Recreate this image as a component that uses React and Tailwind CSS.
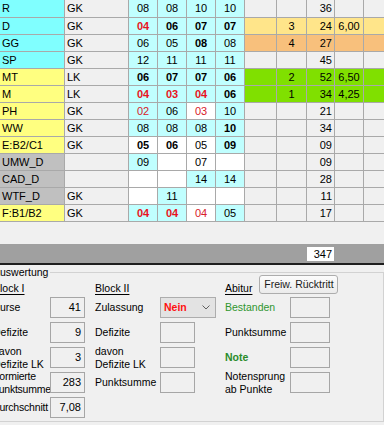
import { Fragment } from "react";

const COLS = "grid-cols-[64px_63px_28px_28px_28px_28px_31px_29px_27px_28px_1fr]";

const NAME_BG = {
  c: "bg-[#80ffff]",
  y: "bg-[#ffff80]",
  g: "bg-[#c0c0c0]",
};

const ROW_BG = {
  n: "bg-[#f0f0f0]",
  y: "bg-[#ffe58a]",
  o: "bg-[#f8c07c]",
  g: "bg-[#80e000]",
};

const TXT = {
  n: "text-black",
  b: "font-bold text-black",
  rb: "font-bold text-[#e8141e]",
  r: "text-[#d8202a]",
};

// grade: [value, style, white background]
const ROWS = [
  { n: "R", nb: "c", t: "GK", g: [["08"], ["08"], ["10"], ["10"]], k: "", s: "36", a: "", rb: "n" },
  { n: "D", nb: "c", t: "GK", g: [["04", "rb"], ["06", "b"], ["07", "b"], ["07", "b"]], k: "3", s: "24", a: "6,00", rb: "y" },
  { n: "GG", nb: "c", t: "GK", g: [["06"], ["05"], ["08", "b"], ["08"]], k: "4", s: "27", a: "", rb: "o" },
  { n: "SP", nb: "c", t: "GK", g: [["12"], ["11"], ["11"], ["11"]], k: "", s: "45", a: "", rb: "n" },
  { n: "MT", nb: "y", t: "LK", g: [["06", "b"], ["07", "b"], ["07", "b"], ["06", "b"]], k: "2", s: "52", a: "6,50", rb: "g" },
  { n: "M", nb: "y", t: "LK", g: [["04", "rb"], ["03", "rb"], ["04", "rb"], ["06", "b"]], k: "1", s: "34", a: "4,25", rb: "g" },
  { n: "PH", nb: "y", t: "GK", g: [["02", "r"], ["06"], ["03", "r", true], ["10"]], k: "", s: "21", a: "", rb: "n" },
  { n: "WW", nb: "y", t: "GK", g: [["08"], ["08"], ["08"], ["10", "b"]], k: "", s: "34", a: "", rb: "n" },
  { n: "E:B2/C1", nb: "y", t: "GK", g: [["05", "b", true], ["06", "b", true], ["05", "n", true], ["09", "b"]], k: "", s: "09", a: "", rb: "n" },
  { n: "UMW_D", nb: "g", t: "", g: [["09"], ["", "n", true], ["07", "n", true], ["", "n", true]], k: "", s: "09", a: "", rb: "n" },
  { n: "CAD_D", nb: "g", t: "", g: [["", "n", true], ["", "n", true], ["14"], ["14"]], k: "", s: "28", a: "", rb: "n" },
  { n: "WTF_D", nb: "g", t: "GK", g: [["", "n", true], ["11"], ["", "n", true], ["", "n", true]], k: "", s: "11", a: "", rb: "n" },
  { n: "F:B1/B2", nb: "y", t: "GK", g: [["04", "rb"], ["04", "rb"], ["04", "r", true], ["05"]], k: "", s: "17", a: "", rb: "n" },
];

function Box({ value, className = "w-[35px]" }) {
  return (
    <div className={`${className} h-[21px] border border-[#a6a6a6] bg-[#f0f0f0] pr-[3px] text-right text-[11px] leading-[19px]`}>
      {value}
    </div>
  );
}

function Label({ children, className = "" }) {
  return <div className={`flex h-[21px] items-center whitespace-nowrap leading-[13px] ${className}`}>{children}</div>;
}

function Auswertung() {
  return (
    <div className="pt-[7px]">
      <div className="-ml-[12px] h-[150px] border border-[#d2d2d2]">
        <div className="-mt-[7px] ml-[4px] h-[13px] leading-[13px]">
          <span className="bg-[#f0f0f0] pr-[2px]">Auswertung</span>
        </div>

        <div className="grid grid-cols-[58px_35px_75px_56px_74px_40px] grid-rows-[18px] auto-rows-[25px] pl-[3px]">
          {/* headings */}
          <div className="col-span-2 pl-[1px] pt-[3px] leading-[13px] underline underline-offset-2">Block I</div>
          <div className="col-span-2 pl-[10px] pt-[3px] leading-[13px] underline underline-offset-2">Block II</div>
          <div className="col-span-2 flex items-start pl-[9px]">
            <span className="pt-[3px] leading-[13px] underline underline-offset-2">Abitur</span>
            <button
              type="button"
              className="-mt-[4px] ml-[7px] h-[19px] w-[79px] shrink-0 whitespace-nowrap rounded-[3px] border border-[#adadad] bg-gradient-to-b from-[#fcfcfc] to-[#ebebeb] text-center leading-[17px] text-[#1a1a1a]"
            >
              Freiw. Rücktritt
            </button>
          </div>

          {/* row 1 */}
          <Label className="pl-[1px]">Kurse</Label>
          <Box value="41" />
          <Label className="pl-[10px]">Zulassung</Label>
          <div className="flex h-[21px] w-[56px] items-center justify-between border border-[#adadad] bg-[#e3e3e3] pl-[3px] pr-[5px]">
            <span className="font-bold text-[#ff1010]">Nein</span>
            <svg width="8" height="5" viewBox="0 0 8 5" className="text-[#606060]">
              <path d="M0.5 0.5 L4 4 L7.5 0.5" fill="none" stroke="currentColor" strokeWidth="1" />
            </svg>
          </div>
          <Label className="pl-[9px] text-[#2f962f]">Bestanden</Label>
          <Box value="" className="w-[40px]" />

          {/* row 2 */}
          <Label className="pl-[1px]">Defizite</Label>
          <Box value="9" />
          <Label className="pl-[10px]">Defizite</Label>
          <Box value="" />
          <Label className="pl-[9px]">Punktsumme</Label>
          <Box value="" className="w-[40px]" />

          {/* row 3 */}
          <Label className="pl-[1px]">
            davon
            <br />
            Defizite LK
          </Label>
          <Box value="3" />
          <Label className="pl-[10px]">
            davon
            <br />
            Defizite LK
          </Label>
          <Box value="" />
          <Label className="pl-[9px] font-bold text-[#2a8c2a]">Note</Label>
          <Box value="" className="w-[40px]" />

          {/* row 4 */}
          <Label className="tracking-[-0.25px]">
            Normierte
            <br />
            Punktsumme
          </Label>
          <Box value="283" />
          <Label className="pl-[10px]">Punktsumme</Label>
          <Box value="" />
          <Label className="pl-[9px]">
            Notensprung
            <br />
            ab Punkte
          </Label>
          <Box value="" className="w-[40px]" />

          {/* row 5 */}
          <Label className="tracking-[-0.2px]">Durchschnitt</Label>
          <Box value="7,08" />
        </div>
      </div>
    </div>
  );
}

export default function App() {
  return (
    <div className="h-[425px] w-[384px] overflow-hidden bg-[#f0f0f0] font-['Liberation_Sans',Arial,sans-serif] text-[10.5px] text-black">
      <div className={`grid ${COLS} grid-rows-[17px] auto-rows-[16px] gap-px bg-[#a9a9a9] pb-px text-[11px] leading-[16px]`}>
        {ROWS.map((r) => {
          const bg = ROW_BG[r.rb];
          return (
            <Fragment key={r.n}>
              <div className={`${NAME_BG[r.nb]} pl-[2px]`}>{r.n}</div>
              <div className="bg-[#f0f0f0] pl-[2px]">{r.t}</div>
              {r.g.map(([v, st = "n", white], i) => (
                <div key={i} className={`${white ? "bg-white" : "bg-[#c0ffff]"} text-center ${TXT[st]}`}>
                  {v}
                </div>
              ))}
              <div className={bg} />
              <div className={`${bg} text-center`}>{r.k}</div>
              <div className={`${bg} pr-[2px] text-right`}>{r.s}</div>
              <div className={`${bg} text-center`}>{r.a}</div>
              <div className={bg} />
            </Fragment>
          );
        })}
      </div>

      <div className="h-[22px]" />

      <div className={`grid ${COLS} h-[19px] items-center gap-px bg-[#a0a0a0]`}>
        <div className="col-start-9 h-[14px] bg-white pr-[2px] text-right text-[11px] leading-[14px]">347</div>
      </div>
      <div className="h-[2px] bg-[#1e1e1e]" />

      <Auswertung />
    </div>
  );
}
